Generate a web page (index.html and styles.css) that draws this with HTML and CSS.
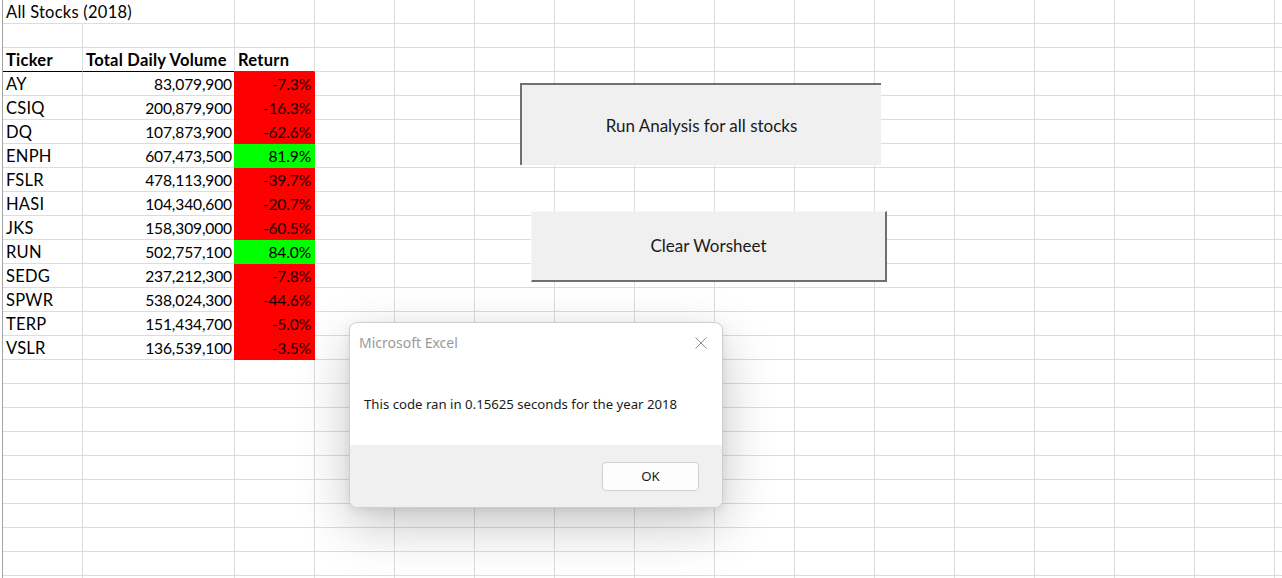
FILE: index.html
```html
<!DOCTYPE html>
<html>
<head>
<meta charset="utf-8">
<title>All Stocks (2018)</title>
<link rel="stylesheet" href="styles.css">
</head>
<body>
<div class="sheet">
  <div class="cols">
    <div class="c title">All Stocks (2018)</div><div class="c"></div><div class="c"></div>
    <div class="c"></div><div class="c"></div><div class="c"></div>
    <div class="c hd line">Ticker</div><div class="c hd line">Total Daily Volume</div><div class="c hd neg-top">Return</div>
    <div class="c">AY</div><div class="c num">83,079,900</div><div class="c num neg">-7.3%</div>
    <div class="c">CSIQ</div><div class="c num">200,879,900</div><div class="c num neg">-16.3%</div>
    <div class="c">DQ</div><div class="c num">107,873,900</div><div class="c num neg">-62.6%</div>
    <div class="c">ENPH</div><div class="c num">607,473,500</div><div class="c num pos">81.9%</div>
    <div class="c">FSLR</div><div class="c num">478,113,900</div><div class="c num neg">-39.7%</div>
    <div class="c">HASI</div><div class="c num">104,340,600</div><div class="c num neg">-20.7%</div>
    <div class="c">JKS</div><div class="c num">158,309,000</div><div class="c num neg">-60.5%</div>
    <div class="c">RUN</div><div class="c num">502,757,100</div><div class="c num pos">84.0%</div>
    <div class="c">SEDG</div><div class="c num">237,212,300</div><div class="c num neg">-7.8%</div>
    <div class="c">SPWR</div><div class="c num">538,024,300</div><div class="c num neg">-44.6%</div>
    <div class="c">TERP</div><div class="c num">151,434,700</div><div class="c num neg">-5.0%</div>
    <div class="c">VSLR</div><div class="c num">136,539,100</div><div class="c num neg">-3.5%</div>
    <div class="c"></div><div class="c"></div><div class="c"></div>
    <div class="c"></div><div class="c"></div><div class="c"></div>
    <div class="c"></div><div class="c"></div><div class="c"></div>
    <div class="c"></div><div class="c"></div><div class="c"></div>
    <div class="c"></div><div class="c"></div><div class="c"></div>
    <div class="c"></div><div class="c"></div><div class="c"></div>
    <div class="c"></div><div class="c"></div><div class="c"></div>
    <div class="c"></div><div class="c"></div><div class="c"></div>
    <div class="c"></div><div class="c"></div><div class="c"></div>
    <div class="c"></div><div class="c"></div><div class="c"></div>
  </div>
  <div class="rest"></div>

  <div class="btn btn-run">Run Analysis for all stocks</div>
  <div class="btn btn-clear">Clear Worsheet</div>

  <div class="dialog">
    <div class="dlg-head">
      <span class="dlg-title">Microsoft Excel</span>
      <svg class="dlg-close" width="12" height="12" viewBox="0 0 12 12"><path d="M0.5 0.5 L11.5 11.5 M11.5 0.5 L0.5 11.5" stroke="#8a8a8a" stroke-width="1" fill="none"/></svg>
    </div>
    <div class="dlg-body">This code ran in 0.15625 seconds for the year 2018</div>
    <div class="dlg-foot"><div class="dlg-ok">OK</div></div>
  </div>
</div>
</body>
</html>
```

FILE: styles.css
```css
html, body {
  margin: 0;
  padding: 0;
  background: #fff;
  overflow: hidden;
}
.sheet {
  position: relative;
  width: 1282px;
  height: 578px;
  display: flex;
  padding-left: 2px;
  box-sizing: border-box;
  font-family: "Lato", "Liberation Sans", sans-serif;
  font-size: 16.5px;
  color: #000;
  overflow: hidden;
}
.cols {
  display: grid;
  grid-template-columns: 80px 152px 80px;
  grid-auto-rows: 24px;
  border-left: 1px solid #a3a3a3;
  align-content: start;
}
.c {
  box-sizing: border-box;
  border-right: 1px solid #dcdcdc;
  border-bottom: 1px solid #dcdcdc;
  line-height: 23px;
  padding: 1px 3px 0;
  white-space: nowrap;
  letter-spacing: 0.25px;
}
.title {
  overflow: visible;
  border-right-color: transparent;
  position: relative;
  z-index: 1;
}
.hd { font-weight: bold; }
.line { border-bottom-color: #000; }
.neg-top { border-bottom-color: #ff0000; }
.num {
  text-align: right;
  padding-right: 2px;
  font-size: 15.6px;
  letter-spacing: -0.15px;
}
.neg, .pos {
  margin-left: -1px;
  padding-right: 3px;
}
.neg { background: #ff0000; border-color: #ff0000; color: #1a0000; }
.pos { background: #00ff00; border-color: #00ff00; }
.rest {
  flex: 1;
  background-image:
    linear-gradient(to right, transparent 79px, #dcdcdc 79px),
    linear-gradient(to bottom, transparent 23px, #dcdcdc 23px);
  background-size: 80px 100%, 100% 24px;
}
.btn {
  position: absolute;
  box-sizing: border-box;
  background: #f0f0f0;
  display: flex;
  align-items: center;
  justify-content: center;
  color: #1a1a1a;
  font-size: 17px;
}
.btn-run {
  left: 520px;
  top: 83px;
  width: 361px;
  height: 82px;
  border-top: 2px solid #707070;
  border-left: 2px solid #707070;
}
.btn-clear {
  left: 531px;
  top: 211px;
  width: 356px;
  height: 71px;
  padding-bottom: 1px;
  border-right: 2px solid #6e6e6e;
  border-bottom: 2px solid #6e6e6e;
  border-top: 1px solid #f6f6f6;
  border-left: 1px solid #f6f6f6;
}
.dialog {
  position: absolute;
  left: 349px;
  top: 322px;
  width: 374px;
  height: 186px;
  box-sizing: border-box;
  border: 1px solid #cfcfcf;
  border-radius: 8px;
  background: #fff;
  box-shadow: 0 18px 52px rgba(0, 0, 0, 0.22), 0 3px 10px rgba(0, 0, 0, 0.08);
  display: flex;
  flex-direction: column;
  overflow: hidden;
  font-family: "Noto Sans", "Open Sans", sans-serif;
  font-size: 13.2px;
}
.dlg-head {
  height: 39px;
  display: flex;
  align-items: center;
  justify-content: space-between;
  padding: 0 15px 1px 9px;
}
.dlg-title {
  color: #9a9a9a;
  font-size: 14px;
}
.dlg-body {
  flex: 1;
  display: flex;
  align-items: center;
  padding: 0 0 1px 14px;
  color: #1a1a1a;
}
.dlg-foot {
  height: 62px;
  background: #f0f0f0;
  display: flex;
  justify-content: flex-end;
  align-items: center;
  padding-right: 23px;
}
.dlg-ok {
  width: 97px;
  height: 29px;
  box-sizing: border-box;
  border: 1px solid #d0d0d0;
  border-radius: 4px;
  background: #fdfdfd;
  display: flex;
  align-items: center;
  justify-content: center;
  color: #1a1a1a;
}
```
